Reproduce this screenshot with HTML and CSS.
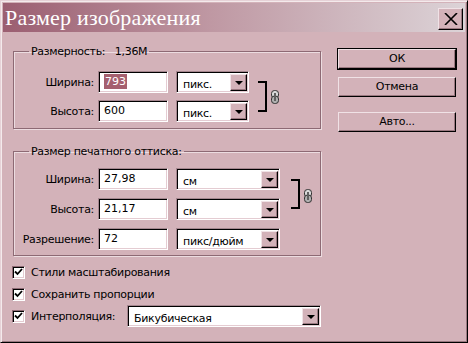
FILE: index.html
```html
<!DOCTYPE html>
<html>
<head>
<meta charset="utf-8">
<link rel="stylesheet" href="styles.css">
</head>
<body>
<div class="window">
  <div class="titlebar">
    <span class="title">Размер изображения</span>
    <span class="close">
      <svg width="14" height="12" viewBox="0 0 14 12"><path d="M1 0 L13 12 M13 0 L1 12" stroke="#000" stroke-width="1.6"/></svg>
    </span>
  </div>
  <div class="content">
    <div class="left">
      <fieldset class="group g1">
        <legend>Размерность:&nbsp;&nbsp; 1,36М</legend>
        <div class="linked">
          <div class="rows">
            <div class="row">
              <label class="lbl">Ширина:</label>
              <div class="field input"><span class="sel">793</span></div>
              <div class="field select s1"><span class="val">пикс.</span><span class="arrow"><i></i></span></div>
            </div>
            <div class="row">
              <label class="lbl">Высота:</label>
              <div class="field input">600</div>
              <div class="field select s1"><span class="val">пикс.</span><span class="arrow"><i></i></span></div>
            </div>
          </div>
          <div class="bracket"></div>
          <svg class="chain" width="8" height="14" viewBox="0 0 8 14"><rect x="0.5" y="0.5" width="7" height="7.5" rx="3" fill="#d8d8d8" stroke="#303030"/><rect x="0.5" y="6" width="7" height="7.5" rx="3" fill="#b0b0b0" stroke="#303030"/><rect x="3" y="3" width="2" height="8" fill="#606060"/></svg>
        </div>
      </fieldset>

      <fieldset class="group g2">
        <legend>Размер печатного оттиска:</legend>
        <div class="linked">
          <div class="rows r2">
            <div class="row">
              <label class="lbl">Ширина:</label>
              <div class="field input">27,98</div>
              <div class="field select s2"><span class="val">см</span><span class="arrow"><i></i></span></div>
            </div>
            <div class="row">
              <label class="lbl">Высота:</label>
              <div class="field input">21,17</div>
              <div class="field select s2"><span class="val">см</span><span class="arrow"><i></i></span></div>
            </div>
          </div>
          <div class="bracket b2"></div>
          <svg class="chain" width="8" height="14" viewBox="0 0 8 14"><rect x="0.5" y="0.5" width="7" height="7.5" rx="3" fill="#d8d8d8" stroke="#303030"/><rect x="0.5" y="6" width="7" height="7.5" rx="3" fill="#b0b0b0" stroke="#303030"/><rect x="3" y="3" width="2" height="8" fill="#606060"/></svg>
        </div>
        <div class="row res">
          <label class="lbl">Разрешение:</label>
          <div class="field input">72</div>
          <div class="field select s2"><span class="val">пикс/дюйм</span><span class="arrow"><i></i></span></div>
        </div>
      </fieldset>

      <div class="checks">
        <div class="check"><span class="box"><svg width="9" height="8" viewBox="0 0 9 8"><path d="M1 3.5 L3.5 6 L8 1" stroke="#000" stroke-width="1.8" fill="none"/></svg></span>Стили масштабирования</div>
        <div class="check"><span class="box"><svg width="9" height="8" viewBox="0 0 9 8"><path d="M1 3.5 L3.5 6 L8 1" stroke="#000" stroke-width="1.8" fill="none"/></svg></span>Сохранить пропорции</div>
        <div class="check interp"><span class="box"><svg width="9" height="8" viewBox="0 0 9 8"><path d="M1 3.5 L3.5 6 L8 1" stroke="#000" stroke-width="1.8" fill="none"/></svg></span><span class="ilbl">Интерполяция:</span>
          <div class="field select s3"><span class="val">Бикубическая</span><span class="arrow"><i></i></span></div>
        </div>
      </div>
    </div>
    <div class="buttons">
      <div class="btn default">ОК</div>
      <div class="btn">Отмена</div>
      <div class="btn auto">Авто...</div>
    </div>
  </div>
</div>
</body>
</html>
```
FILE: styles.css
```css
* { box-sizing: border-box; }
html, body { margin: 0; padding: 0; }
body {
  width: 468px; height: 343px; overflow: hidden;
  font-family: "DejaVu Sans", sans-serif;
  font-size: 11px;
  letter-spacing: -0.3px;
  color: #000;
}
.window {
  width: 468px; height: 343px;
  background: #d3b2b9;
  border: 1px solid;
  border-color: #e6d2d7 #000 #000 #e6d2d7;
  box-shadow: inset 1px 1px 0 #f4eaec, inset -1px -1px 0 #9a7880;
  padding: 2px;
  display: flex; flex-direction: column;
}
.titlebar {
  height: 29px;
  flex-shrink: 0;
  background: linear-gradient(to right, #9b5e71, #bf98a3 45%, #dcd3d7);
  display: flex; align-items: center; justify-content: space-between;
  padding: 0 2px 0 2px;
}
.title {
  font-family: "Liberation Serif", serif;
  font-size: 22px;
  color: #fff;
  letter-spacing: 0.2px;
  margin-top: 1px;
}
.close {
  width: 25px; height: 22px;
  background: #d3b2b9;
  border: 1px solid; border-color: #f0e2e6 #000 #000 #f0e2e6;
  box-shadow: inset -1px -1px 0 #9a7880;
  display: flex; align-items: center; justify-content: center;
  margin-top: 2px;
}
.content {
  display: flex;
  padding: 13px 0 0 10px;
}
.left { width: 310px; flex-shrink: 0; }
.group {
  margin: 0; padding: 0;
  border: 1px solid #8d6a74;
  box-shadow: 1px 1px 0 #ecdce0, inset 1px 1px 0 #ecdce0;
  width: 308px;
}
.group legend {
  padding: 0 2px;
  margin-left: 15px;
  line-height: 13px;
}
.g1 { height: 84px; }
.g2 { height: 111px; margin-top: 16px; }
.linked { display: flex; align-items: center; }
.rows { display: flex; flex-direction: column; gap: 7px; padding-top: 13px; }
.r2 { padding-top: 10px; gap: 8px; }
.row { display: flex; align-items: center; height: 22px; }
.row > *, .check > *, .linked > * { flex-shrink: 0; }
.lbl { width: 80px; text-align: right; margin-right: 4px; }
.field {
  height: 22px;
  background: #fff;
  border: 1px solid;
  border-color: #a4868e #fff #fff #a4868e;
  box-shadow: inset 1px 1px 0 #000, inset -1px -1px 0 #e4ccd2;
}
.input {
  width: 70px;
  padding: 3px 0 0 5px;
  line-height: 14px;
  letter-spacing: 0;
}
.sel { background: #a5606f; color: #fff; padding: 1px 1px 1px 1px; }
.select {
  display: flex; align-items: stretch;
  margin-left: 8px;
  padding: 2px 1px 1px 2px;
}
.s1 { width: 73px; }
.s2 { width: 104px; }
.s3 { width: 194px; }
.val { flex: 1; padding: 4px 0 0 4px; line-height: 13px; }
.arrow {
  width: 17px;
  flex-shrink: 0;
  background: #d3b2b9;
  border: 1px solid; border-color: #f0e2e6 #000 #000 #f0e2e6;
  box-shadow: inset -1px -1px 0 #9a7880;
  display: flex; align-items: center; justify-content: center;
}
.arrow i {
  width: 0; height: 0;
  border-left: 4px solid transparent;
  border-right: 4px solid transparent;
  border-top: 4px solid #000;
  margin-top: 1px;
}
.bracket {
  width: 9px; height: 31px;
  border: 2px solid #000; border-left: 0;
  margin-left: 9px; margin-top: 13px;
}
.b2 { margin-left: 11px; margin-top: 10px; height: 30px; }
.chain { margin-left: 4px; margin-top: 13px; }
.res { margin-top: 8px; }
.checks { padding-top: 9px; margin-left: -1px; }
.check { display: flex; align-items: center; height: 14px; margin-bottom: 8px; }
.check.interp { margin-top: 4px; }
.box {
  width: 13px; height: 13px;
  background: #fff;
  border: 1px solid; border-color: #8d6a74 #fff #fff #8d6a74;
  box-shadow: inset 1px 1px 0 #000, inset -1px -1px 0 #e4ccd2;
  display: flex; align-items: center; justify-content: center;
  margin-right: 6px;
}
.ilbl { width: 86px; }
.interp .select { margin-left: 10px; }
.buttons {
  display: flex; flex-direction: column;
  margin-left: 15px; margin-top: 4px;
}
.btn {
  width: 118px; height: 20px;
  border: 1px solid; border-color: #f0e2e6 #000 #000 #f0e2e6;
  box-shadow: inset -1px -1px 0 #9a7880;
  text-align: center; line-height: 17px;
  margin-bottom: 8px;
}
.btn.default { outline: 1px solid #000; }
.btn.auto { margin-top: 7px; }
```
